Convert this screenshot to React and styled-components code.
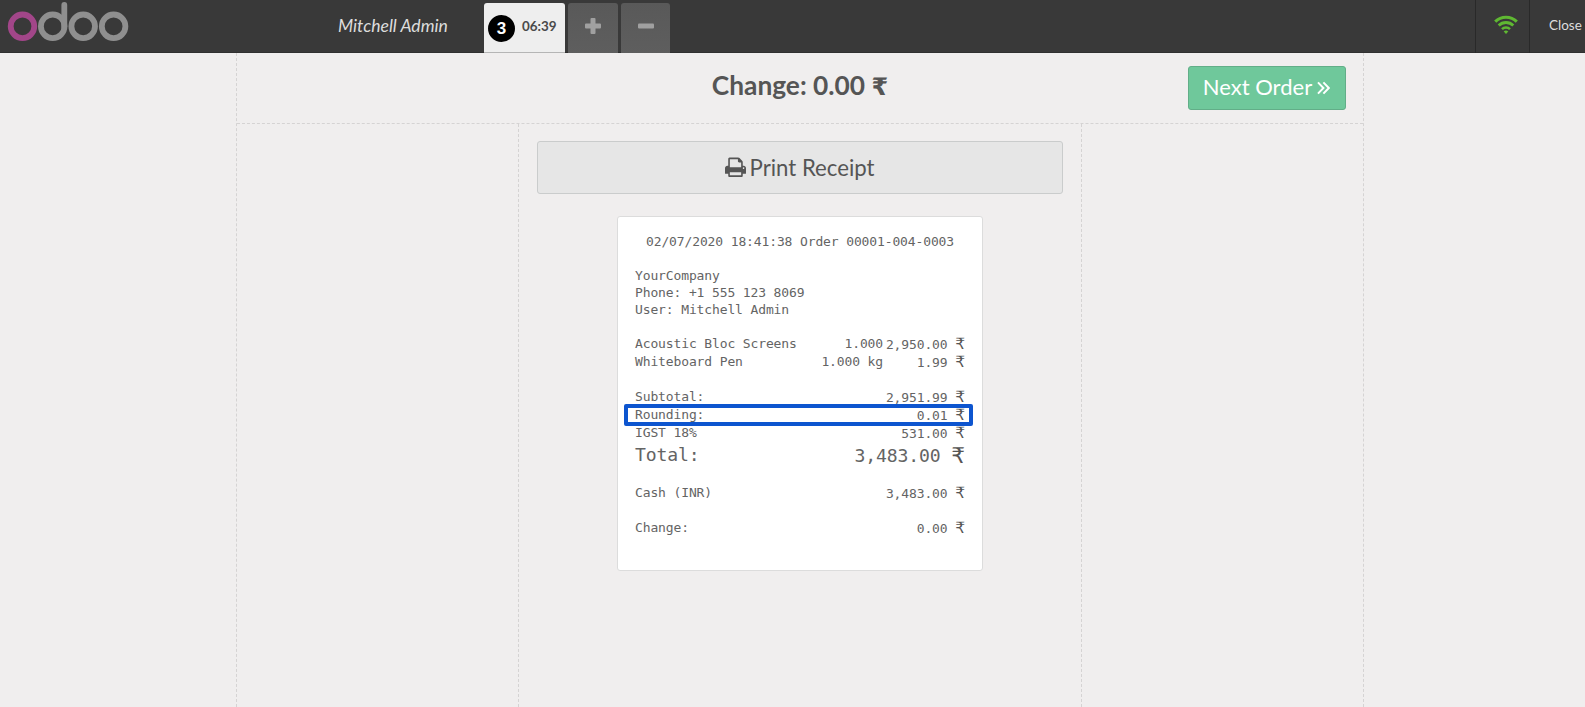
import React from "react";
import styled, { createGlobalStyle } from "styled-components";

const Global = createGlobalStyle`
  *, *::before, *::after { box-sizing: border-box; }
  html, body { margin: 0; padding: 0; overflow: hidden; }
  body { font-family: Lato, "Liberation Sans", sans-serif; color: #555; background: #f0eeee; }
`;

const Page = styled.div`
  display: flex;
  flex-direction: column;
  width: 1585px;
  height: 707px;
  overflow: hidden;
`;

const TopBar = styled.header`
  display: flex;
  flex: none;
  height: 53px;
  background: #393939;
  box-shadow: inset 0 -1px 0 #303030;
`;

const Brand = styled.div`
  width: 338px;
  svg { display: block; }
`;

const UserName = styled.div`
  width: 146px;
  font-size: 17.6px;
  line-height: 52px;
  font-style: italic;
  color: #ddd;
  white-space: nowrap;
`;

const Tabs = styled.div`
  display: flex;
  flex: 1;
  gap: 3px;
  padding-top: 3px;
`;

const ActiveTab = styled.div`
  display: flex;
  align-items: center;
  width: 81px;
  height: 50px;
  padding: 1px 0 0 4px;
  gap: 7px;
  border-radius: 3px 3px 0 0;
  border-bottom: 1px solid #b5b5b5;
  background: #eee;
  font-size: 13.4px;
  font-weight: 700;
  color: #4a4a4a;
`;

const Badge = styled.span`
  display: flex;
  align-items: center;
  justify-content: center;
  width: 27px;
  height: 27px;
  padding-top: 2px;
  border-radius: 50%;
  background: #000;
  color: #fff;
  font: 700 17px "Liberation Sans", sans-serif;
`;

const TabTime = styled.span`
  padding-bottom: 4px;
`;

const TabButton = styled.button`
  display: flex;
  justify-content: center;
  width: ${(p) => p.$width}px;
  height: 50px;
  padding: 15px 0 0;
  border: 0;
  border-radius: 3px 3px 0 0;
  background: linear-gradient(#595959, #5e5e5e);
`;

const StatusCell = styled.div`
  width: 54px;
  height: 53px;
  border-left: 1px solid #292929;
  padding: 15px 0 0 18px;
  svg { display: block; }
`;

const CloseButton = styled.div`
  width: 56px;
  border-left: 1px solid #292929;
  padding-left: 19px;
  font-size: 13.5px;
  line-height: 50px;
  color: #ddd;
`;

const Screen = styled.main`
  display: flex;
  flex-direction: column;
  flex: 1;
  width: 1128px;
  margin-left: 236px;
  border-left: 1px dashed #d5d3d3;
  border-right: 1px dashed #d5d3d3;
`;

const ScreenHeader = styled.div`
  display: grid;
  grid-template-columns: 1fr auto 1fr;
  height: 71px;
  padding: 13px 17px 0;
  border-bottom: 1px dashed #d5d3d3;
`;

const ChangeTitle = styled.h1`
  grid-column: 2;
  margin: 0;
  font-size: 26.3px;
  line-height: 38px;
  font-weight: 700;
`;

const TitleRupee = styled.span`
  font-family: "DejaVu Sans", sans-serif;
  font-size: 24px;
  line-height: 1;
`;

const NextButton = styled.button`
  display: flex;
  align-items: center;
  justify-self: end;
  justify-content: center;
  gap: 5px;
  width: 158px;
  height: 44px;
  padding: 0 1px 3px 0;
  border: 1px solid #62ae88;
  border-radius: 3px;
  background: #6fc89b;
  color: #fff;
  font: 400 22px Lato, sans-serif;
  svg { margin-top: 2px; }
`;

const Center = styled.section`
  display: flex;
  flex-direction: column;
  align-items: center;
  flex: 1;
  width: 564px;
  align-self: center;
  padding-top: 17px;
  border-left: 1px dashed #d5d3d3;
  border-right: 1px dashed #d5d3d3;
`;

const PrintButton = styled.button`
  display: flex;
  align-items: center;
  justify-content: center;
  gap: 4px;
  width: 526px;
  height: 53px;
  padding: 0 1px 1px 0;
  border: 1px solid #cacccc;
  border-radius: 3px;
  background: #e6e6e6;
  color: #555;
  font: 400 22.2px Lato, sans-serif;
`;

const Receipt = styled.article`
  width: 366px;
  height: 355px;
  margin-top: 22px;
  padding: 16px 17px;
  border: 1px solid #dcdcdc;
  border-radius: 3px;
  background: #fff;
  font-family: "DejaVu Sans Mono", monospace;
  font-size: 13px;
  letter-spacing: -0.126px;
  line-height: 17px;
  color: #646464;
  white-space: pre;
`;

const OrderTitle = styled.div`
  text-align: center;
`;

const Block = styled.div`
  margin-top: ${(p) => p.$gap}px;
`;

const Line = styled.div`
  display: grid;
  grid-template-columns: 1fr auto 82px;
  height: ${(p) => (p.$total ? 25 : 18)}px;
  line-height: ${(p) => (p.$total ? 25 : 17)}px;
  font-size: ${(p) => (p.$total ? 18.1 : 13)}px;
`;

const Amount = styled.span`
  display: flex;
  justify-content: flex-end;
  padding-top: 1px;
`;

const Rupee = styled.span`
  font-family: "DejaVu Sans", sans-serif;
  font-size: 1.2em;
  color: #555;
`;

const RoundingLine = styled(Line)`
  position: relative;
  &::after {
    content: "";
    position: absolute;
    left: -11px;
    right: -8px;
    top: -2px;
    height: 22px;
    border: 4px solid #0d55cf;
    border-radius: 2px;
  }
`;

function OdooLogo() {
  return (
    <svg width="136" height="48" viewBox="0 0 136 48" fill="none" strokeWidth="5.8">
      <circle cx="22.5" cy="26.3" r="11.8" stroke="#a24689" />
      <g stroke="#8f8f8f">
        <circle cx="52.7" cy="26.3" r="11.8" />
        <circle cx="83.2" cy="26.3" r="11.8" />
        <circle cx="113.6" cy="26.3" r="11.8" />
        <path d="M64.3 26.3V5" strokeLinecap="round" />
      </g>
    </svg>
  );
}

function WifiIcon() {
  return (
    <svg width="24" height="20" viewBox="0 0 24 20" fill="none" stroke="#5fb832" strokeWidth="3">
      <path d="M1.200 6.600a15.400 15.400 0 0 1 21.600 0" />
      <path d="M4.700 10.500a10.400 10.400 0 0 1 14.600 0" strokeWidth="2.8" />
      <path d="M8 14.100a5.700 5.700 0 0 1 8 0" strokeWidth="2.600" />
      <path d="M12 19l-2.300-2.400a3.300 3.300 0 0 1 4.600 0z" fill="#5fb832" stroke="none" />
    </svg>
  );
}

function PrintIcon() {
  return (
    <svg width="21" height="22.6" viewBox="0 0 1664 1792" fill="currentColor">
      <path d="M384 1536h896v-256h-896v256zM384 896h896v-384h-160q-40 0-68-28t-28-68v-160h-640v640zM1536 960q0-26-19-45t-45-19-45 19-19 45 19 45 45 19 45-19 19-45zM1664 960v416q0 13-9.500 22.500t-22.500 9.500h-224v160q0 40-28 68t-68 28h-960q-40 0-68-28t-28-68v-160h-224q-13 0-22.500-9.500t-9.500-22.500v-416q0-79 56.500-135.500t135.500-56.500h64v-544q0-40 28-68t68-28h672q40 0 88 20t76 48l152 152q28 28 48 76t20 88v256h64q79 0 135.500 56.500t56.500 135.500z" />
    </svg>
  );
}

function DoubleAngle() {
  return (
    <svg width="13" height="14" viewBox="0 0 13 14" fill="none" stroke="#fff" strokeWidth="2">
      <path d="M1 1.400L6.400 7L1 12.600M6.400 1.400L11.800 7L6.400 12.600" />
    </svg>
  );
}

function Entry({ label, qty, amount, total, as: Row = Line }) {
  return (
    <Row $total={total}>
      <span>{label}</span>
      <span>{qty}</span>
      <Amount>{amount} <Rupee>₹</Rupee></Amount>
    </Row>
  );
}

export default function App() {
  return (
    <Page>
      <Global />
      <TopBar>
        <Brand><OdooLogo /></Brand>
        <UserName>Mitchell Admin</UserName>
        <Tabs>
          <ActiveTab>
            <Badge>3</Badge>
            <TabTime>06:39</TabTime>
          </ActiveTab>
          <TabButton $width={50} aria-label="New order">
            <svg width="16" height="16" viewBox="0 0 16 16" fill="#a0a0a0">
              <path d="M6.500 0h3a1 1 0 0 1 1 1v4.500H15a1 1 0 0 1 1 1v3a1 1 0 0 1-1 1h-4.500V15a1 1 0 0 1-1 1h-3a1 1 0 0 1-1-1v-4.500H1a1 1 0 0 1-1-1v-3a1 1 0 0 1 1-1h4.500V1a1 1 0 0 1 1-1z" />
            </svg>
          </TabButton>
          <TabButton $width={49} aria-label="Delete order">
            <svg width="16" height="16" viewBox="0 0 16 16" fill="#a0a0a0">
              <rect y="5.500" width="16" height="5" rx="1" />
            </svg>
          </TabButton>
        </Tabs>
        <StatusCell><WifiIcon /></StatusCell>
        <CloseButton>Close</CloseButton>
      </TopBar>
      <Screen>
        <ScreenHeader>
          <ChangeTitle>Change: 0.00 <TitleRupee>₹</TitleRupee></ChangeTitle>
          <NextButton>Next Order <DoubleAngle /></NextButton>
        </ScreenHeader>
        <Center>
          <PrintButton><PrintIcon />Print Receipt</PrintButton>
          <Receipt>
            <OrderTitle>02/07/2020 18:41:38 Order 00001-004-0003</OrderTitle>
            <Block $gap={17}>
              <div>YourCompany</div>
              <div>Phone: +1 555 123 8069</div>
              <div>User: Mitchell Admin</div>
            </Block>
            <Block $gap={17}>
              <Entry label="Acoustic Bloc Screens" qty="1.000" amount="2,950.00" />
              <Entry label="Whiteboard Pen" qty="1.000 kg" amount="1.99" />
            </Block>
            <Block $gap={17}>
              <Entry label="Subtotal:" amount="2,951.99" />
              <Entry as={RoundingLine} label="Rounding:" amount="0.01" />
              <Entry label="IGST 18%" amount="531.00" />
              <Entry total label="Total:" amount="3,483.00" />
            </Block>
            <Block $gap={17}>
              <Entry label="Cash (INR)" amount="3,483.00" />
            </Block>
            <Block $gap={17}>
              <Entry label="Change:" amount="0.00" />
            </Block>
          </Receipt>
        </Center>
      </Screen>
    </Page>
  );
}
